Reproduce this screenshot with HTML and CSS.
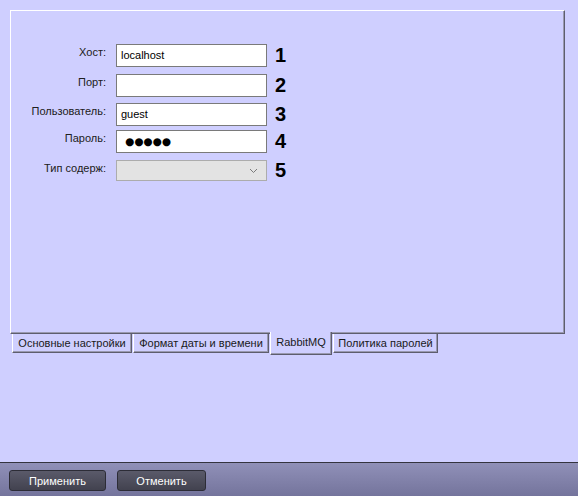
FILE: index.html
```html
<!DOCTYPE html>
<html lang="ru">
<head>
<meta charset="utf-8">
<title>RabbitMQ</title>
<link rel="stylesheet" href="styles.css">
</head>
<body>
<div class="page">
  <div class="main">
    <div class="panel">
      <div class="form">
        <div class="row r1">
          <label class="lbl">Хост:</label>
          <div class="field">localhost</div>
          <span class="num">1</span>
        </div>
        <div class="row r2">
          <label class="lbl">Порт:</label>
          <div class="field"></div>
          <span class="num">2</span>
        </div>
        <div class="row r3">
          <label class="lbl">Пользователь:</label>
          <div class="field">guest</div>
          <span class="num">3</span>
        </div>
        <div class="row r4">
          <label class="lbl">Пароль:</label>
          <div class="field pwd">●●●●●</div>
          <span class="num">4</span>
        </div>
        <div class="row r5">
          <label class="lbl">Тип содерж:</label>
          <div class="select">
            <svg class="chev" width="9" height="6" viewBox="0 0 9 6"><path d="M1 1 L4.5 4.5 L8 1" fill="none" stroke="#7a7a7a" stroke-width="1"/></svg>
          </div>
          <span class="num">5</span>
        </div>
      </div>
    </div>
    <div class="tabs">
      <div class="tab t1">Основные настройки</div>
      <div class="tab t2">Формат даты и времени</div>
      <div class="tab t3 active">RabbitMQ</div>
      <div class="tab t4">Политика паролей</div>
    </div>
  </div>
  <div class="footer">
    <button class="btn b1">Применить</button>
    <button class="btn b2">Отменить</button>
  </div>
</div>
</body>
</html>
```
FILE: styles.css
```css
html, body {
  margin: 0;
  padding: 0;
}
body {
  background: #cfcfff;
  font-family: "Liberation Sans", Arial, sans-serif;
  font-size: 11px;
  color: #1a1a1a;
  width: 578px;
  height: 496px;
  overflow: hidden;
}
.page {
  display: flex;
  flex-direction: column;
  height: 496px;
}
.main {
  flex: 1;
  padding: 10px 0 0 10px;
}
.panel {
  box-sizing: border-box;
  width: 555px;
  height: 324px;
  border-top: 1px solid #ffffff;
  border-left: 1px solid #ffffff;
  border-right: 1px solid #5e5e6e;
  border-bottom: 1px solid #5e5e6e;
  box-shadow: inset -1px -1px 0 #9a9ab0;
  padding-top: 33px;
}
.form {
  display: flex;
  flex-direction: column;
}
.row {
  display: flex;
  align-items: flex-start;
  height: 23px;
}
.r2 { margin-top: 7px; }
.r3 { margin-top: 6px; }
.r4 { margin-top: 4px; }
.r5 { margin-top: 7px; height: 21px; }
.lbl {
  width: 95px;
  text-align: right;
  padding-top: 2px;
  line-height: 13px;
  color: #202020;
}
.field {
  box-sizing: border-box;
  margin-left: 10px;
  width: 151px;
  height: 23px;
  background: #ffffff;
  border: 1px solid #7a7a7a;
  padding: 3px 0 0 4px;
  line-height: 14px;
  color: #000;
}
.pwd {
  font-family: "DejaVu Sans", sans-serif;
  font-size: 10.5px;
  padding-left: 8px;
}
.select {
  box-sizing: border-box;
  margin-left: 10px;
  width: 151px;
  height: 21px;
  background: #e3e3e3;
  border: 1px solid #acacac;
  display: flex;
  align-items: center;
  justify-content: flex-end;
  padding-right: 8px;
}
.num {
  margin-left: 8px;
  font-weight: bold;
  font-size: 20px;
  line-height: 23px;
  color: #000;
}
.r5 .num { line-height: 21px; }
.tabs {
  display: flex;
  margin-left: 2px;
  gap: 1px;
  align-items: flex-start;
}
.tab {
  position: relative;
  box-sizing: border-box;
  height: 19px;
  line-height: 17px;
  padding-top: 1px;
  text-align: center;
  border-left: 1px solid #ffffff;
  border-right: 1px solid #5e5e6e;
  border-bottom: 1px solid #5e5e6e;
  box-shadow: inset -1px -1px 0 #9a9ab0;
  color: #1a1a1a;
  white-space: nowrap;
  overflow: hidden;
}
.t1 { width: 120px; }
.t2 { width: 136px; }
.t3 { width: 62px; }
.t4 { width: 105px; }
.tab.active {
  margin-top: -2px;
  height: 23px;
  padding-top: 2px;
  background: #cfcfff;
  z-index: 1;
}
.footer {
  box-sizing: border-box;
  height: 34px;
  border-top: 1px solid #34343f;
  background: linear-gradient(#9090b8, #74749c);
  display: flex;
  align-items: flex-start;
  padding: 7px 0 0 9px;
  gap: 11px;
}
.btn {
  box-sizing: border-box;
  height: 21px;
  border: 1px solid #2c2c36;
  border-radius: 3px;
  background: linear-gradient(#5a5a6a, #42424f);
  color: #ffffff;
  font-family: "Liberation Sans", Arial, sans-serif;
  font-size: 11px;
  padding: 0;
}
.b1 { width: 97px; }
.b2 { width: 89px; }
```
